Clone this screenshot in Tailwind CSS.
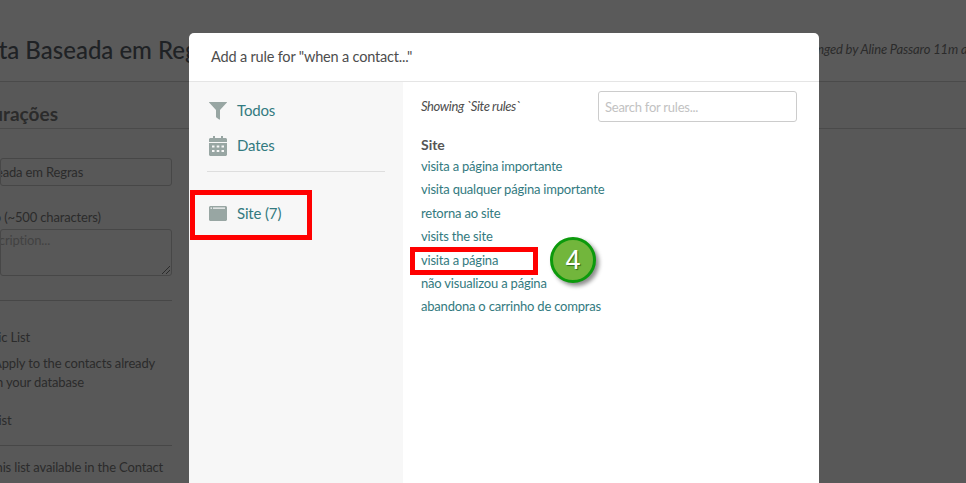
<!DOCTYPE html>
<html lang="en">
<head>
<meta charset="UTF-8" />
<title>Lista Baseada em Regras</title>
<script src="https://cdn.jsdelivr.net/npm/@tailwindcss/browser@4"></script>
</head>
<body class="relative w-[966px] h-[483px] overflow-hidden bg-[#585858] font-['Lato',sans-serif] text-[#2b2b2b]">

<!-- page behind the overlay -->
<header class="h-[82px] bg-[#5a5a5a] border-b border-[#4a4a4a] flex items-center justify-between pt-[18px]">
  <h1 class="ml-[-30px] text-[24px] font-medium whitespace-nowrap text-[#1f2225]">Lista Baseada em Regras</h1>
  <p class="mr-[-14px] italic text-[13px] tracking-[-0.15px] whitespace-nowrap">Last changed by Aline Passaro 11m ago</p>
</header>
<div class="h-[47px] border-b border-[#4a4a4a]"></div>

<aside class="absolute left-0 top-[100px] w-[172px] text-[13px] tracking-[-0.15px]">
  <h2 class="ml-[-63px] text-[19px] font-bold leading-[28px] whitespace-nowrap tracking-normal">Configurações</h2>
  <div class="mt-[30px] h-[28px] border border-[#474747] rounded-[3px] flex items-center overflow-hidden">
    <span class="ml-[-54px] mt-[1px] whitespace-nowrap">Lista Baseada em Regras</span>
  </div>
  <p class="mt-[21px] ml-[-54px] leading-[20px] whitespace-nowrap">Descrição (~500 characters)</p>
  <div class="relative mt-[2px] h-[47px] border border-[#474747] rounded-[3px] overflow-hidden">
    <span class="block ml-[-24px] mt-[1px] text-[#424242] whitespace-nowrap">Description...</span>
    <svg class="absolute right-0 bottom-0 w-[10px] h-[10px]" viewBox="0 0 10 10" stroke="#2b2b2b" fill="none"><path d="M1 9l8-8M5 9l4-4"/></svg>
  </div>
  <div class="mt-[24px] border-t border-[#474747]"></div>
  <p class="mt-[26px] ml-[-42px] leading-[20px] whitespace-nowrap">Dynamic List</p>
  <p class="mt-[7px] ml-[-7px] leading-[19px] whitespace-nowrap">Apply to the contacts already<br />in your database</p>
  <p class="mt-[18px] ml-[-42px] leading-[20px] whitespace-nowrap">Static List</p>
  <div class="mt-[15px] border-t border-[#474747]"></div>
  <p class="mt-[11px] ml-[-43px] leading-[20px] whitespace-nowrap">Make this list available in the Contact</p>
</aside>

<!-- modal -->
<section class="absolute left-[189px] top-[33px] w-[630px] h-[450px] bg-white rounded-t-[5px] overflow-hidden flex flex-col">
  <div class="h-[49px] shrink-0 border-b border-[#e5e5e5] pl-[22px] flex items-center text-[14.5px] tracking-[-0.18px] text-[#4d4d4d]">Add a rule for "when a contact..."</div>
  <div class="flex flex-1">
    <nav class="w-[214px] bg-[#f7f7f7] pt-[11px] pl-[20px] pr-[18px] text-[15px] tracking-[-0.15px] text-[#337a80]">
      <a class="flex items-center h-[35px] gap-[10px]">
        <svg class="w-[18px] h-[18px]" viewBox="0 0 18 18" fill="#98a6a3"><path d="M0.3 0h17.400c.3 0 .4.4.2.6L11 8v8.800c0 .6-.4 1.200-.9.8L7.400 15.600c-.2-.2-.4-.4-.4-.8V8L.1.600C-.1.400 0 0 .3 0z"/></svg>
        Todos
      </a>
      <a class="flex items-center h-[35px] gap-[10px]">
        <svg class="w-[18px] h-[20px]" viewBox="0 0 18 20" fill="#98a6a3"><path fill-rule="evenodd" d="M4 0h2v2h6V0h2v2h2.500c.8 0 1.500.7 1.500 1.500V6H0V3.500C0 2.700.7 2 1.500 2H4zM0 7h18v11.500c0 .8-.7 1.500-1.500 1.500h-15C.7 20 0 19.300 0 18.500zM3 9.500v2h2.500v-2zm4.700 0v2h2.600v-2zm4.800 0v2H15v-2zM3 14v2h2.500v-2zm4.700 0v2h2.600v-2zm4.800 0v2H15v-2z"/></svg>
        Dates
      </a>
      <div class="mt-[8px] ml-[-2px] border-t border-[#dedede]"></div>
      <a class="mt-[24px] flex items-center h-[35px] gap-[10px]">
        <svg class="w-[18px] h-[15px]" viewBox="0 0 18 15" fill="#98a6a3"><path fill-rule="evenodd" d="M1.500 0h15C17.300 0 18 .7 18 1.500v12c0 .8-.7 1.500-1.500 1.500h-15C.7 15 0 14.300 0 13.500v-12C0 .7.700 0 1.500 0zM1.500 1.500v1.200h1.500V1.500zm2.500 0v1.200h12V1.500z"/></svg>
        Site (7)
      </a>
    </nav>
    <div class="flex-1 pl-[18px] pr-[22px] pt-[9px]">
      <div class="flex items-center justify-between">
        <span class="italic text-[13px] tracking-[-0.4px] text-[#4d4d4d]">Showing `Site rules`</span>
        <input class="w-[199px] h-[31px] border border-[#cccccc] rounded-[3px] px-[6px] text-[13px] tracking-[-0.25px] placeholder:text-[#c2c2c2]" placeholder="Search for rules..." />
      </div>
      <h3 class="mt-[13px] text-[14px] font-bold leading-[20px] text-[#555555]">Site</h3>
      <ul class="text-[13px] tracking-[-0.2px] leading-[23.4px] text-[#337a80]">
        <li>visita a página importante</li>
        <li>visita qualquer página importante</li>
        <li>retorna ao site</li>
        <li>visits the site</li>
        <li>visita a página</li>
        <li>não visualizou a página</li>
        <li>abandona o carrinho de compras</li>
      </ul>
    </div>
  </div>
</section>

<!-- annotations -->
<div class="absolute left-[190px] top-[190px] w-[122px] h-[50px] border-[5px] border-[#ff0000]"></div>
<div class="absolute left-[410px] top-[247px] w-[128px] h-[28px] border-[5px] border-[#ff0000]"></div>
<div class="absolute left-[550px] top-[237px] w-[46px] h-[46px] rounded-full border-[3px] border-[#0c9a0c] bg-[#72b63c] shadow-[3px_3px_4px_rgba(0,0,0,0.45)] flex items-center justify-center text-[27px] text-white [text-shadow:1px_1px_1px_rgba(0,60,0,0.6)] font-['Liberation_Sans',sans-serif]">4</div>

</body>
</html>
